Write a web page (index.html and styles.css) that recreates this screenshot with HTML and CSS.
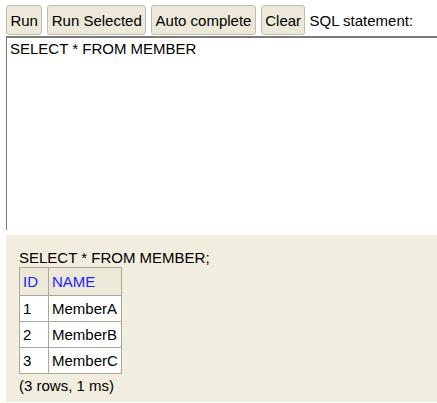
FILE: index.html
```html
<!DOCTYPE html>
<html>
<head>
<meta charset="utf-8">
<link rel="stylesheet" href="styles.css">
</head>
<body>
<div class="toolbar">
  <button class="btn">Run</button>
  <button class="btn">Run Selected</button>
  <button class="btn">Auto complete</button>
  <button class="btn">Clear</button>
  <span class="label">SQL statement:</span>
</div>
<div class="editor">SELECT * FROM MEMBER</div>
<div class="result">
  <div class="stmt">SELECT * FROM MEMBER;</div>
  <table class="grid">
    <tr><th class="c-id">ID</th><th>NAME</th></tr>
    <tr><td>1</td><td>MemberA</td></tr>
    <tr><td>2</td><td>MemberB</td></tr>
    <tr><td>3</td><td>MemberC</td></tr>
  </table>
  <div class="foot">(3 rows, 1 ms)</div>
</div>
</body>
</html>
```
FILE: styles.css
```css
html, body { margin: 0; padding: 0; background: #fff; }
body {
  font-family: "Liberation Sans", Arial, sans-serif;
  font-size: 15px;
  color: #000;
  padding: 5px 0 0 6px;
}
.toolbar {
  display: flex;
  align-items: center;
  gap: 5px;
  height: 30px;
}
.btn {
  font-family: inherit;
  font-size: 15px;
  height: 30px;
  padding: 0 3.4px;
  background: #ece9d8;
  border: 1px solid #c0bdb0;
  border-radius: 3px;
  color: #000;
}
.label { margin-left: -1px; }
.editor {
  margin-top: 1px;
  height: 186px;
  border-top: 2px solid #7a7a7a;
  border-left: 1px solid #7a7a7a;
  padding: 2px 3px 4px;
  white-space: pre;
}
.result {
  margin-top: 5px;
  background: #f1eddf;
  padding: 14px 0 8px 13px;
  height: 145px;
}
.stmt { line-height: 17px; }
.grid {
  border-collapse: collapse;
  margin-top: 1px;
}
.grid th, .grid td {
  border: 1px solid #aca899;
  padding: 0 3px;
  text-align: left;
  font-weight: normal;
  height: 25px;
}
.grid th { background: #ece9d8; color: #2222ff; height: 27px; }
.grid td { background: #fff; }
.grid .c-id { width: 22px; }
.foot { margin-top: 3px; }
```
